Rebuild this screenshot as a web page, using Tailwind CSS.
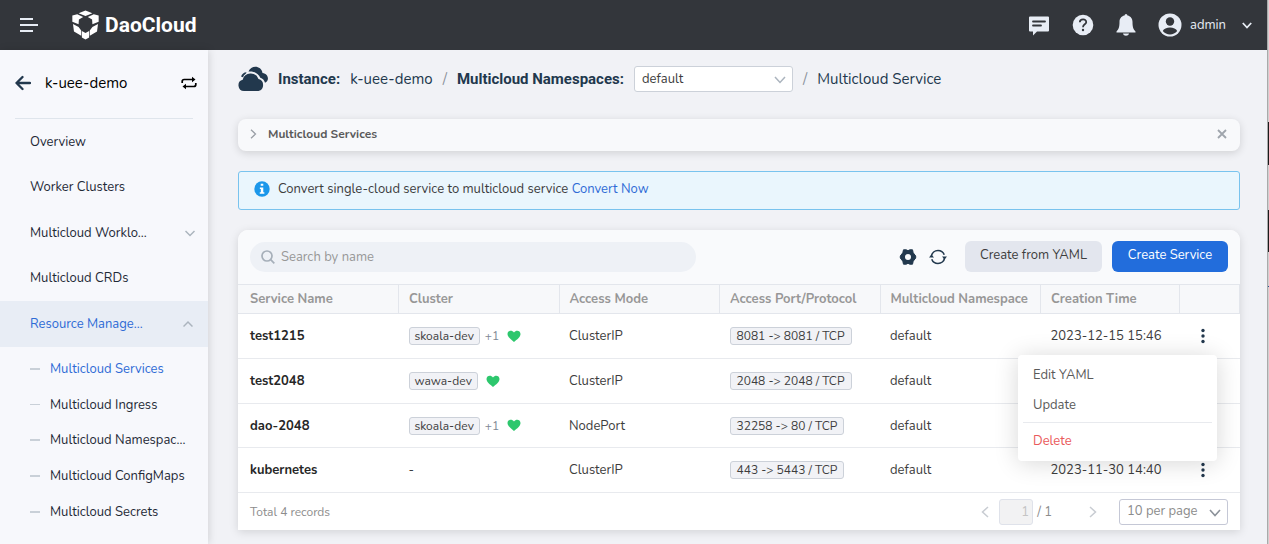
<!DOCTYPE html>
<html lang="en">
<head>
<meta charset="utf-8">
<title>DaoCloud - Multicloud Service</title>
<script src="https://cdn.jsdelivr.net/npm/@tailwindcss/browser@4"></script>
</head>
<body class="flex h-screen overflow-hidden bg-[#f1f2f6] font-[Nunito,Lato,sans-serif] text-[13px] leading-5 text-[#3d3d3d]">
<div class="flex min-w-0 flex-1 flex-col">
  <header class="flex h-[50px] shrink-0 items-center bg-[#33363b] pl-5 pr-[15px] text-[#e8edf5]">
    <button aria-label="Toggle menu" class="mr-8"><svg class="h-5 w-5" viewBox="0 0 20 20" stroke="currentColor" stroke-width="2"><path d="M0 4h13M0 10h18M0 16h13"/></svg></button>
    <a href="#" class="flex items-center gap-[6px] text-white">
      <svg class="h-[30px] w-[27px]" viewBox="216 29 82 90" fill="currentColor"><path d="M236 38l21-8 21 8-21 9zM217 45l15-4 18 9-13 7-1 15-19-8zM297 45l-15-4-18 9 13 7 1 15 19-8zM219 71l17 9 8 11v16l-22-13zM295 71l-17 9-8 11v16l22-13zM246 92l11 6 11-6v20l-11 6-11-6z"/></svg>
      <span class="font-[Roboto,sans-serif] text-[21px] font-bold leading-7">DaoCloud</span>
    </a>
    <div class="ml-auto flex items-center">
      <button aria-label="Messages" class="mr-[22px]"><svg class="h-[22px] w-[22px]" viewBox="0 0 22 22"><path fill="currentColor" d="M2 2.500h18q1 0 1 1v13q0 1-1 1H9l-4 4v-4H2q-1 0-1-1v-13q0-1 1-1z"/><path d="M5 7.500h12M5 11.500h8" stroke="#33363b" stroke-width="1.800" stroke-linecap="round"/></svg></button>
      <button aria-label="Help" class="mr-[22px]"><svg class="h-[22px] w-[22px]" viewBox="0 0 22 22"><circle cx="11" cy="11" r="10.300" fill="currentColor"/><path d="M7.800 8.300c.2-4 6.700-3.700 6.400-.1-.2 2.200-3.200 2.200-3.200 5" fill="none" stroke="#33363b" stroke-width="1.800"/><circle cx="11" cy="16" r="1.200" fill="#33363b"/></svg></button>
      <button aria-label="Notifications" class="mr-[22px]"><svg class="h-[22px] w-[20px]" viewBox="0 0 20 22" fill="currentColor"><path d="M10 0q1.300 0 1.500 1.600c3.500.7 5 3.500 5 6.400 0 5 .7 7 3 9.500v1H.5v-1C2.800 15 3.500 13 3.500 8c0-2.900 1.500-5.700 5-6.400Q8.700 0 10 0zM7 19.500h6c-.5 3-5.500 3-6 0z"/></svg></button>
      <button class="flex items-center text-[#e8edf5]">
        <svg class="mr-2 h-6 w-6" viewBox="0 0 24 24"><circle cx="12" cy="12" r="11.500" fill="currentColor"/><circle cx="12" cy="8.500" r="4.200" fill="#33363b"/><path d="M4.800 18c1.700-4.800 12.700-4.800 14.400 0-3.500 4.500-10.900 4.500-14.400 0z" fill="#33363b"/></svg>
        <span class="mr-4">admin</span>
        <svg class="h-[10px] w-[10px]" viewBox="0 0 10 10" fill="none" stroke="currentColor" stroke-width="1.800"><path d="M.8 3L5 7.500 9.200 3"/></svg>
      </button>
    </div>
  </header>

  <div class="flex min-h-0 flex-1">
    <nav class="w-[208px] shrink-0 bg-[#f7f8fc] text-[#1f2a37] shadow-[1px_0_8px_rgba(0,0,0,0.13)]">
      <div class="mx-[15px] flex h-[69px] items-center border-b border-[#dfe5ec] pb-[2px] text-[15px] text-black">
        <a href="#" aria-label="Back" class="mr-[14px]"><svg class="h-4 w-4" viewBox="0 0 16 16" fill="none" stroke="#22384d" stroke-width="2.300" stroke-linecap="round" stroke-linejoin="round"><path d="M15 8H1.500M7.500 2l-6 6 6 6"/></svg></a>
        <span>k-uee-demo</span>
        <button aria-label="Switch instance" class="-mr-1 ml-auto"><svg class="h-4 w-4" viewBox="0 0 16 16" fill="none" stroke="#000" stroke-width="1.700"><path d="M1.200 8V6.500q0-2 2-2H12M14.800 8v1.500q0 2-2 2H4"/><path d="M11 1.700v5.600l3.500-2.800zM5 8.700v5.600l-3.500-2.800z" fill="#000" stroke="none"/></svg></button>
      </div>
      <div class="grid h-[182px] grid-rows-4">
        <a href="#" class="flex items-center pl-[30px] pr-[13px]">Overview</a>
        <a href="#" class="flex items-center pl-[30px] pr-[13px]">Worker Clusters</a>
        <a href="#" class="flex items-center justify-between pl-[30px] pr-[13px]">Multicloud Worklo...<svg class="h-[10px] w-[10px]" viewBox="0 0 10 10" fill="none" stroke="#abb4be" stroke-width="1.500"><path d="M.5 3L5 7.500 9.500 3"/></svg></a>
        <a href="#" class="flex items-center pl-[30px] pr-[13px]">Multicloud CRDs</a>
      </div>
      <a href="#" class="flex h-[46px] items-center justify-between bg-[#e8edf5] pl-[30px] pr-[15px] text-[#2f6bd6]">Resource Manage...<svg class="h-[10px] w-[10px]" viewBox="0 0 10 10" fill="none" stroke="#abb4be" stroke-width="1.500"><path d="M.5 7.500L5 3l4.500 4.500"/></svg></a>
      <div class="mt-1 grid h-[179px] grid-rows-5">
        <a href="#" class="flex items-center gap-[10px] pl-[30px] text-[#2f6bd6]"><i class="h-[2px] w-[10px] bg-[#c9d0d8]"></i>Multicloud Services</a>
        <a href="#" class="flex items-center gap-[10px] pl-[30px]"><i class="h-px w-[10px] bg-[#c9d0d8]"></i>Multicloud Ingress</a>
        <a href="#" class="flex items-center gap-[10px] pl-[30px]"><i class="h-[2px] w-[10px] bg-[#c9d0d8]"></i>Multicloud Namespac...</a>
        <a href="#" class="flex items-center gap-[10px] pl-[30px]"><i class="h-[2px] w-[10px] bg-[#c9d0d8]"></i>Multicloud ConfigMaps</a>
        <a href="#" class="flex items-center gap-[10px] pl-[30px]"><i class="h-[2px] w-[10px] bg-[#c9d0d8]"></i>Multicloud Secrets</a>
      </div>
    </nav>

    <main class="min-w-0 flex-1 pl-[30px] pr-[27px] pt-[14px]">
      <div class="flex h-[30px] items-center text-[15px] text-[#22384d]">
        <svg class="mr-[10px] h-[26px] w-[30px]" viewBox="0 0 30 26" fill="#22384d"><path d="M6 25a5.700 5.700 0 0 1-1.300-11.200A8.300 8.300 0 0 1 20.500 13 6.200 6.200 0 0 1 20.500 25z"/><path d="M10.500 5.500C13-1.500 23.500-.8 24.500 7c6.500.8 7 8.300 2.500 9.800-.7-2.700-2.300-4.300-4.700-5C20.200 7.300 16 4.800 10.500 5.500z"/><path d="M3 10.500Q4.500 6.500 8.500 6.300L8 7.500Q5.500 9 5 11.300z"/></svg>
        <strong class="mr-[10px] font-[Roboto,sans-serif] font-bold">Instance:</strong>
        <span>k-uee-demo</span>
        <span class="mx-[10px] text-[#8a919a]">/</span>
        <label for="ns" class="mr-[10px] font-[Roboto,sans-serif] font-bold">Multicloud Namespaces:</label>
        <span class="relative mr-[10px] w-[159px]">
          <select id="ns" class="block h-[26px] w-full appearance-none rounded-[3px] border border-[#ccd1d9] bg-white pl-[7px] text-[13px] text-[#3d3d3d]"><option>default</option></select>
          <svg class="pointer-events-none absolute right-[7px] top-2 h-3 w-3" viewBox="0 0 12 12" fill="none" stroke="#abb4be" stroke-width="1.500"><path d="M1 3l5 5.500L11 3"/></svg>
        </span>
        <span class="mr-[10px] text-[#8a919a]">/</span>
        <span>Multicloud Service</span>
      </div>

      <section class="mt-[25px] flex h-8 items-center rounded-lg bg-[#f8f9fb] px-[10px] pb-[2px] text-xs text-[#5a5a5a] shadow-[0_2px_8px_rgba(0,0,0,0.14)]">
        <button class="flex items-center gap-[10px] font-bold"><svg class="h-[10px] w-[10px]" viewBox="0 0 10 10" fill="none" stroke="#9a9fa6" stroke-width="1.300"><path d="M3 .8L7.500 5 3 9.200"/></svg>Multicloud Services</button>
        <button aria-label="Close" class="ml-auto mr-[3px]"><svg class="h-[10px] w-[10px]" viewBox="0 0 10 10" stroke="#9fa5ac" stroke-width="1.800"><path d="M1 1l8 8M9 1L1 9"/></svg></button>
      </section>

      <section class="mt-5 flex h-[39px] items-center rounded-[3px] border border-[#79c3ee] bg-[#eaf6fd] px-[15px] pb-[3px]">
        <svg class="mr-2 h-4 w-4" viewBox="0 0 15 15"><circle cx="7.500" cy="7.500" r="7.200" fill="#1b97ea"/><path d="M6.300 2.500h2.400v2H6.300zM5.500 6h3.200v4.500h1V12H5.400v-1.500h1V7.500h-.9z" fill="#fff"/></svg>
        <p>Convert single-cloud service to multicloud service <a href="#" class="text-[#2f6bd6]">Convert Now</a></p>
      </section>

      <section class="relative mt-5 rounded-t-[10px] bg-white shadow-[0_2px_10px_rgba(0,0,0,0.13)]">
        <div class="flex h-[54px] items-center rounded-t-[10px] bg-[#f9fafc] px-3 pb-px">
          <label class="flex h-[30px] w-[446px] items-center gap-[6px] rounded-full bg-[#eef1f6] px-[11px]">
            <svg class="h-[14px] w-[14px]" viewBox="0 0 14 14" fill="none" stroke="#a6afb9" stroke-width="1.700"><circle cx="6" cy="6" r="5"/><path d="M9.700 9.700L13.300 13.300"/></svg>
            <input type="text" placeholder="Search by name" aria-label="Search by name" class="min-w-0 flex-1 bg-transparent outline-none placeholder:text-[#979797]">
          </label>
          <button aria-label="Settings" class="ml-auto mr-3"><svg class="h-[18px] w-[18px]" viewBox="0 0 18 18"><path fill="#22384d" stroke="#22384d" stroke-linejoin="round" d="M4.500 1.800h2.700L9 2.700l1.800-.9h2.700l.7 3L16.700 8v2l-2.500 3.200-.7 3h-2.700L9 15.300l-1.800.9H4.500l-.7-3L1.300 10V8l2.500-3.200z"/><circle cx="9" cy="9" r="3" fill="#f9fafc"/></svg></button>
          <button aria-label="Refresh" class="mr-[18px]"><svg class="h-[18px] w-[18px]" viewBox="0 0 18 18" fill="none" stroke="#22384d" stroke-width="1.600"><path d="M2.400 8A6.700 6.700 0 0 1 15.600 8M15.600 10A6.700 6.700 0 0 1 2.400 10" stroke-dasharray="17 2"/><path d="M0 9.500h5L2.500 6.500zM13 8.500h5l-2.500 3z" fill="#22384d" stroke="none"/></svg></button>
          <button class="mr-[10px] h-[31px] w-[137px] rounded-md bg-[#e3e6ee] pb-[3px]">Create from YAML</button>
          <button class="h-[31px] w-[116px] rounded-md bg-[#226ddc] pb-[3px] text-white">Create Service</button>
        </div>

        <table class="w-full table-fixed text-left">
          <colgroup><col><col><col><col><col><col class="w-[139px]"><col class="w-[60px]"></colgroup>
          <thead class="bg-[#f7f8fa] text-[#979797]">
            <tr class="h-[29px] border-y border-[#e3e6ec]">
              <th class="border-r border-[#e3e6ec] pl-3 font-bold">Service Name</th>
              <th class="border-r border-[#e3e6ec] pl-[10px] font-bold">Cluster</th>
              <th class="border-r border-[#e3e6ec] pl-[10px] font-bold">Access Mode</th>
              <th class="border-r border-[#e3e6ec] pl-[10px] font-bold">Access Port/Protocol</th>
              <th class="whitespace-nowrap border-r border-[#e3e6ec] pl-[10px] font-bold">Multicloud Namespace</th>
              <th class="border-r border-[#e3e6ec] pl-[10px] font-bold">Creation Time</th>
              <th aria-label="Actions" class="border-r border-[#e3e6ec]"></th>
            </tr>
          </thead>
          <tbody>
            <tr class="h-[45px] border-b border-[#e8eaee]">
              <td class="pl-3 font-bold text-[#262626]">test1215</td>
              <td class="pl-[10px]"><div class="flex items-center"><span class="rounded-[3px] border border-[#ccd1d9] bg-[#f1f2f6] px-[5px] text-xs leading-4">skoala-dev</span><span class="ml-[5px] text-xs text-[#808894]">+1</span><svg class="ml-2 h-[13px] w-[14px]" viewBox="0 0 14 13"><path fill="#2dc76d" d="M7 12C4 9.500.5 7 .5 4 .5.500 5-.5 7 2.500 9-.5 13.500.5 13.500 4c0 3-3.500 5.500-6.500 8z"/></svg></div></td>
              <td class="pl-[10px]">ClusterIP</td>
              <td class="pl-[10px]"><div class="flex"><span class="rounded-[3px] border border-[#ccd1d9] bg-[#f1f2f6] px-[6px] text-xs leading-4">8081 -&gt; 8081 / TCP</span></div></td>
              <td class="pl-[10px]">default</td>
              <td class="pl-[10px]">2023-12-15 15:46</td>
              <td><button aria-label="More actions" class="ml-[21px] block"><svg class="h-4 w-1" viewBox="0 0 4 16" fill="#22384d"><circle cx="2" cy="2.500" r="1.700"/><circle cx="2" cy="8" r="1.700"/><circle cx="2" cy="13.500" r="1.700"/></svg></button></td>
            </tr>
            <tr class="h-[45px] border-b border-[#e8eaee]">
              <td class="pl-3 font-bold text-[#262626]">test2048</td>
              <td class="pl-[10px]"><div class="flex items-center"><span class="rounded-[3px] border border-[#ccd1d9] bg-[#f1f2f6] px-[5px] text-xs leading-4">wawa-dev</span><svg class="ml-2 h-[13px] w-[14px]" viewBox="0 0 14 13"><path fill="#2dc76d" d="M7 12C4 9.500.5 7 .5 4 .5.500 5-.5 7 2.500 9-.5 13.500.5 13.500 4c0 3-3.500 5.500-6.500 8z"/></svg></div></td>
              <td class="pl-[10px]">ClusterIP</td>
              <td class="pl-[10px]"><div class="flex"><span class="rounded-[3px] border border-[#ccd1d9] bg-[#f1f2f6] px-[6px] text-xs leading-4">2048 -&gt; 2048 / TCP</span></div></td>
              <td class="pl-[10px]">default</td>
              <td></td><td></td>
            </tr>
            <tr class="h-[44px] border-b border-[#e8eaee]">
              <td class="pl-3 font-bold text-[#262626]">dao-2048</td>
              <td class="pl-[10px]"><div class="flex items-center"><span class="rounded-[3px] border border-[#ccd1d9] bg-[#f1f2f6] px-[5px] text-xs leading-4">skoala-dev</span><span class="ml-[5px] text-xs text-[#808894]">+1</span><svg class="ml-2 h-[13px] w-[14px]" viewBox="0 0 14 13"><path fill="#2dc76d" d="M7 12C4 9.500.5 7 .5 4 .5.500 5-.5 7 2.500 9-.5 13.500.5 13.500 4c0 3-3.500 5.500-6.500 8z"/></svg></div></td>
              <td class="pl-[10px]">NodePort</td>
              <td class="pl-[10px]"><div class="flex"><span class="rounded-[3px] border border-[#ccd1d9] bg-[#f1f2f6] px-[6px] text-xs leading-4">32258 -&gt; 80 / TCP</span></div></td>
              <td class="pl-[10px]">default</td>
              <td></td><td></td>
            </tr>
            <tr class="h-[45px] border-b border-[#e8eaee]">
              <td class="pl-3 font-bold text-[#262626]">kubernetes</td>
              <td class="pl-[10px]">-</td>
              <td class="pl-[10px]">ClusterIP</td>
              <td class="pl-[10px]"><div class="flex"><span class="rounded-[3px] border border-[#ccd1d9] bg-[#f1f2f6] px-[6px] text-xs leading-4">443 -&gt; 5443 / TCP</span></div></td>
              <td class="pl-[10px]">default</td>
              <td class="pl-[10px]">2023-11-30 14:40</td>
              <td><button aria-label="More actions" class="ml-[21px] block"><svg class="h-4 w-1" viewBox="0 0 4 16" fill="#22384d"><circle cx="2" cy="2.500" r="1.700"/><circle cx="2" cy="8" r="1.700"/><circle cx="2" cy="13.500" r="1.700"/></svg></button></td>
            </tr>
          </tbody>
        </table>

        <footer class="flex h-[37px] items-center px-3 text-[#8c8c8c]">
          <span class="mr-auto text-xs">Total 4 records</span>
          <button aria-label="Previous page" class="mr-[10px]"><svg class="h-3 w-2" viewBox="0 0 8 12" fill="none" stroke="#c8ccd2" stroke-width="1.500"><path d="M7 1L1.500 6 7 11"/></svg></button>
          <input type="text" value="1" disabled aria-label="Page" class="mr-1 h-[26px] w-[34px] rounded-[3px] border border-[#dfe2ea] bg-[#f2f2f3] pr-[3px] text-right text-[#c4c4c4]">
          <span class="mr-[37px]">/ 1</span>
          <button aria-label="Next page" class="mr-[22px]"><svg class="h-3 w-2" viewBox="0 0 8 12" fill="none" stroke="#c8ccd2" stroke-width="1.500"><path d="M1 1l5.500 5L1 11"/></svg></button>
          <span class="relative w-[109px]">
            <select aria-label="Rows per page" class="block h-[26px] w-full appearance-none rounded-[3px] border border-[#c5c8d6] bg-white pb-[2px] pl-[7px]"><option>10 per page</option></select>
            <svg class="pointer-events-none absolute right-[7px] top-2 h-3 w-3" viewBox="0 0 12 12" fill="none" stroke="#8c929a" stroke-width="1.600"><path d="M1 3l5 5.500L11 3"/></svg>
          </span>
        </footer>

        <div role="menu" class="absolute right-[23px] top-[125px] flex w-[199px] flex-col rounded bg-white px-[5px] py-[5px] text-[#5a5a5a] shadow-[0_2px_24px_rgba(0,0,0,0.16)]">
          <button role="menuitem" class="h-[30px] px-[10px] text-left">Edit YAML</button>
          <button role="menuitem" class="h-[30px] px-[10px] text-left">Update</button>
          <hr class="mb-[3px] mt-[2px] border-[#e8eaee]">
          <button role="menuitem" class="h-[30px] px-[10px] text-left text-[#ea5a5c]">Delete</button>
        </div>
      </section>
    </main>
  </div>
</div>
<!-- window edge -->
<div aria-hidden="true" class="flex w-[2px] shrink-0 flex-col border-l border-[#aaaaaa] bg-[#d0d0d0]">
  <i class="mt-[122px] h-[43px] bg-[#1c1c1c]"></i>
  <i class="mt-[45px] h-[42px] bg-[#1c1c1c]"></i>
  <i class="mt-[34px] h-px bg-[#2a5090]"></i>
</div>
</body>
</html>
